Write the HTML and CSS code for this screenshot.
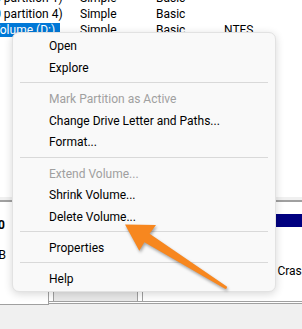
FILE: index.html
```html
<!DOCTYPE html>
<html lang="en">
<head>
<meta charset="utf-8">
<title>Disk Management - context menu</title>
<link rel="stylesheet" href="styles.css">
</head>
<body>
<div class="window">
  <div class="list">
    <div class="rows">
      <div class="row">
        <div class="cell name"><span class="shift">(Disk 0 partition 1)</span></div>
        <div class="cell">Simple</div>
        <div class="cell">Basic</div>
        <div class="cell"></div>
      </div>
      <div class="row">
        <div class="cell name"><span class="shift">(Disk 0 partition 4)</span></div>
        <div class="cell">Simple</div>
        <div class="cell">Basic</div>
        <div class="cell"></div>
      </div>
      <div class="row">
        <div class="cell name"><span class="sel">Volume (D:)</span></div>
        <div class="cell">Simple</div>
        <div class="cell">Basic</div>
        <div class="cell">NTFS</div>
      </div>
    </div>
  </div>
  <div class="splitter"></div>
  <div class="disk">
    <div class="disk-label">
      <div class="label-inner">
        <div class="label-line"><svg class="disk-icon" width="16" height="12" viewBox="0 0 16 12"><rect x="0.5" y="2.5" width="15" height="8" fill="#d0d0d0" stroke="#707070"/></svg><b>Disk 0</b></div>
        <div class="label-line">Basic</div>
        <div class="label-line">476.92 GB</div>
        <div class="label-line">Online</div>
      </div>
    </div>
    <div class="parts">
      <div class="part part-a">
        <div class="part-bar"></div>
      </div>
      <div class="part part-b">
        <div class="part-bar"></div>
        <div class="part-text">
          <div>Windows (C:)</div>
          <div>463.65 GB NTFS</div>
          <div>Healthy (Boot, Page File, Crash Dump, Basic Data Partition)</div>
        </div>
      </div>
    </div>
  </div>
</div>

<div class="menu">
  <div class="item">Open</div>
  <div class="item">Explore</div>
  <div class="sep"></div>
  <div class="item disabled">Mark Partition as Active</div>
  <div class="item">Change Drive Letter and Paths...</div>
  <div class="item">Format...</div>
  <div class="sep"></div>
  <div class="item disabled">Extend Volume...</div>
  <div class="item">Shrink Volume...</div>
  <div class="item">Delete Volume...</div>
  <div class="sep"></div>
  <div class="item">Properties</div>
  <div class="sep"></div>
  <div class="item">Help</div>
</div>

<svg class="arrow" width="302" height="329" viewBox="0 0 302 329">
  <path d="M125 224.5 L156 225 L149.6 233.8 L226.8 286.6 Q227.5 288.6 225.4 289 L144.4 242.2 L139.3 250.7 Z" fill="#f7871f"/>
</svg>
</body>
</html>
```

FILE: styles.css
```css
html, body {
  margin: 0;
  padding: 0;
}

body {
  width: 302px;
  height: 329px;
  overflow: hidden;
  position: relative;
  background: #f0f0f0;
  font-family: Roboto, "Noto Sans", sans-serif;
  font-size: 12px;
  color: #000;
}

.window {
  display: flex;
  flex-direction: column;
  height: 329px;
}

/* volume list */
.list {
  flex: none;
  height: 197px;
  background: #fff;
  overflow: hidden;
}

.rows {
  margin-top: -10px;
}

.row {
  display: grid;
  grid-template-columns: 80px 76px 68px 1fr;
  height: 16px;
  line-height: 16px;
}

.cell {
  white-space: nowrap;
  overflow: hidden;
}

.shift {
  margin-left: -36px;
}

.sel {
  display: inline-block;
  margin-left: -7.6px;
  margin-top: 1px;
  height: 14px;
  line-height: 14px;
  padding-right: 5px;
  background: #0078d7;
  color: #fff;
}

.splitter {
  flex: none;
  height: 3px;
  background: #f0f0f0;
  border-bottom: 2px solid #a0a0a0;
}

/* graphical disk view */
.disk {
  flex: none;
  display: flex;
  align-items: flex-start;
}

.disk-label {
  flex: none;
  box-sizing: border-box;
  width: 49px;
  height: 103px;
  padding-top: 15.5px;
  background: #fff;
  border-right: 1px solid #a0a0a0;
  border-bottom: 1px solid #a0a0a0;
  overflow: hidden;
}

.label-inner {
  margin-left: -49.5px;
  line-height: 15px;
  white-space: nowrap;
}

.label-line {
  display: flex;
  align-items: center;
  gap: 5px;
  height: 15px;
}

.label-line b {
  font-weight: 700;
}

.disk-icon {
  flex: none;
}

.parts {
  flex: 1;
  box-sizing: border-box;
  height: 102px;
  display: flex;
  gap: 4px;
  padding: 12px 0 0 4px;
  background: #fff;
  border-bottom: 3px double #a0a0a0;
  overflow: hidden;
}

.part {
  flex: none;
  box-sizing: border-box;
  border-left: 1px solid #a0a0a0;
  border-right: 1px solid #a0a0a0;
}

.part-a {
  width: 85px;
  background: #e9e9e9;
}

.part-b {
  width: 220px;
  background: #fff;
}

.part-bar {
  height: 13px;
  background: #000080;
}

.part-text {
  padding: 6.4px 0 0 2px;
  line-height: 15.5px;
  white-space: nowrap;
}

/* context menu */
.menu {
  position: absolute;
  left: 12px;
  top: 32px;
  width: 264px;
  box-sizing: border-box;
  padding: 1.15px 0 2px;
  background: #f9f9f9;
  border: 1px solid #e2e2e2;
  border-radius: 7px;
  box-shadow: 0 2px 8px rgba(0, 0, 0, 0.16);
}

.item {
  box-sizing: border-box;
  height: 21.7px;
  padding: 3px 0 0 36px;
  line-height: 18.7px;
  white-space: nowrap;
  color: #000;
}

.item.disabled {
  color: #a0a0a0;
}

.sep {
  height: 1px;
  margin: 4.5px 7px 4px;
  background: #d9d9d9;
}

/* annotation arrow */
.arrow {
  position: absolute;
  left: 0;
  top: 0;
  pointer-events: none;
  filter: drop-shadow(1px 2px 1.5px rgba(0, 0, 0, 0.35));
}
```
